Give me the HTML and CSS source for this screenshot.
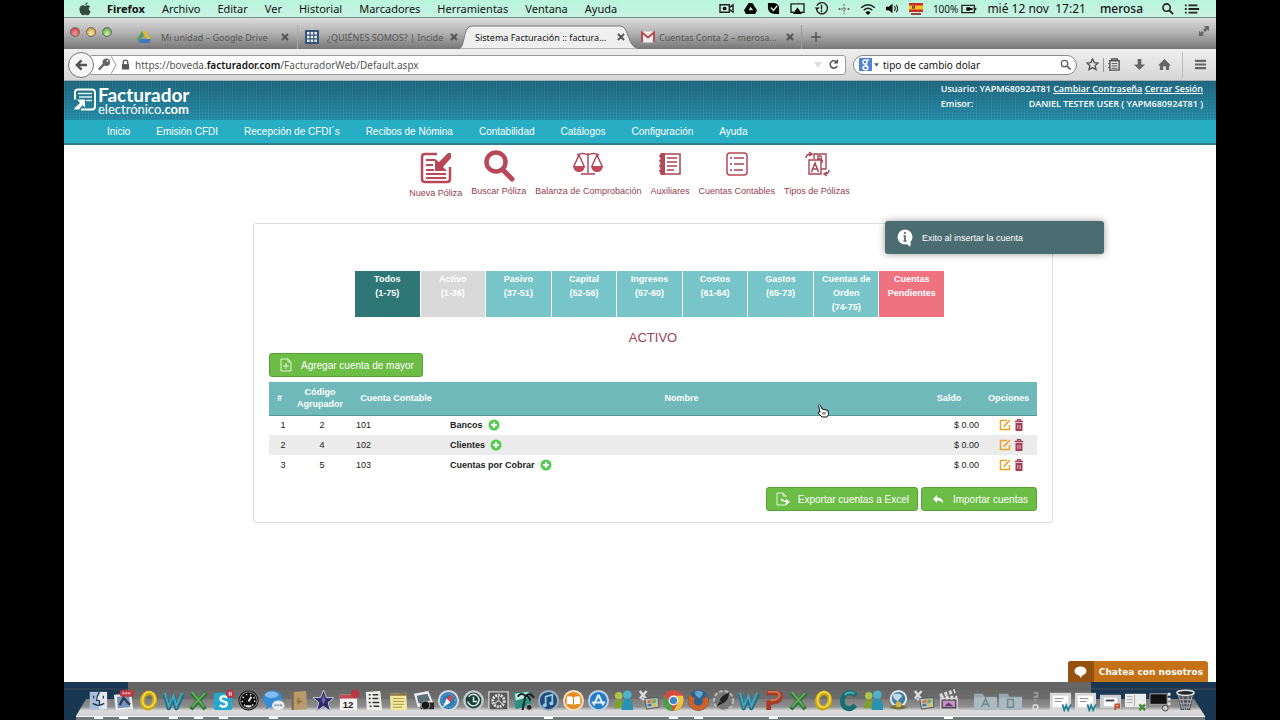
FILE: index.html
```html
<!DOCTYPE html>
<html lang="es">
<head>
<meta charset="utf-8">
<title>Sistema Facturación</title>
<link rel="stylesheet" href="styles.css">
</head>
<body>
<div class="screen">
  <header class="menubar">
    <svg class="apple" viewBox="0 0 12 14"><path d="M8.6.3c.1 1.400-1 2.700-2.400 2.800C6 1.800 7.200.5 8.600.3zM6.200 3.900c.7 0 1.500-.8 2.700-.7 1 .1 1.800.5 2.300 1.300-2 1.200-1.700 4 .4 4.900C11 11.200 10 13 8.800 13.200c-.9.1-1.300-.5-2.400-.5s-1.600.6-2.400.5C1.800 13-.5 8.200.8 5.400 1.500 4 2.700 3.300 3.800 3.300s1.700.6 2.400.6z"/></svg>
    <nav class="menus"><b>Firefox</b><span>Archivo</span><span>Editar</span><span>Ver</span><span>Historial</span><span>Marcadores</span><span>Herramientas</span><span>Ventana</span><span>Ayuda</span></nav>
    <div class="status">
      <svg class="s16" viewBox="0 0 16 14"><path d="M1 3h10v8H1zM11 6l4-3v8l-4-3" fill="none" stroke="#222" stroke-width="1.500"/><circle cx="6" cy="7" r="2"/></svg>
      <svg class="s14" viewBox="0 0 14 14"><path d="M5 1h4l5 8-2 4H2L0 9zM7 5L5 9h5z" fill-rule="evenodd"/></svg>
      <svg class="s14" viewBox="0 0 14 14"><path d="M1 1h6c4 0 6 3 6 6v6H9C4 13 1 10 1 6z"/><path d="M4 6l3 3 4-5" fill="none" stroke="#c8f3e2" stroke-width="1.500"/></svg>
      <svg class="s16" viewBox="0 0 16 14"><path d="M4 11H1V2h14v9h-3" fill="none" stroke="#222" stroke-width="1.500"/><path d="M8 6l5 7H3z"/></svg>
      <svg class="s14" viewBox="0 0 14 14"><path d="M2 4a6 6 0 1 1-.5 4M7 3v5M7 9v2" fill="none" stroke="#222" stroke-width="1.500"/><path d="M0 6h5L2 9z"/></svg>
      <svg class="s12" viewBox="0 0 12 12"><path d="M6 1v10M3 6h6" stroke="#555" stroke-dasharray="2 1" fill="none"/><circle cx="1.500" cy="6" r="1" fill="#555"/><circle cx="10.500" cy="6" r="1" fill="#555"/></svg>
      <svg class="s18" viewBox="0 0 18 14"><g fill="none" stroke="#222" stroke-width="1.700"><path d="M1 5.500q8-7 16 0M4 8.500q5-4.500 10 0"/></g><path d="M6 11q3-3 6 0l-3 3z"/></svg>
      <svg class="s14" viewBox="0 0 14 12"><path d="M0 4h3l4-3v10L3 8H0z"/><path d="M9 3.500q2 2.500 0 5M11 2q3 4 0 8" fill="none" stroke="#222" stroke-width="1.200"/></svg>
      <svg class="flag" viewBox="0 0 14 12"><path fill="#c92b28" d="M0 0h14v9H0z"/><path fill="#f4c51c" d="M0 2.500h14v4H0z"/><path fill="#944" d="M3 2.800h3v3H3zM2 10h10v2H2z"/></svg>
      <span class="charge">100%</span>
      <svg class="s18" viewBox="0 0 18 10"><path d="M1 1h14v8H1zM16.500 3.500v3" fill="none" stroke="#222" stroke-width="1.500"/><path d="M3 5h3V3h4v1h3v2h-3v1H6V5z"/></svg>
      <span class="clock">mié 12 nov&nbsp; 17:21</span>
      <span class="account">merosa</span>
      <svg class="s14" viewBox="0 0 14 14"><circle cx="6" cy="6" r="4" fill="none" stroke="#222" stroke-width="1.700"/><path d="M9 9l4 4" stroke="#222" stroke-width="2"/></svg>
      <svg class="s18" viewBox="0 0 18 12"><path d="M1 2h2M1 6h2M1 10h2M5 2h10M5 6h12M5 10h10" stroke="#222" stroke-width="2"/></svg>
    </div>
  </header>

  <div class="tabstrip">
    <div class="lights"><i class="red"></i><i class="yellow"></i><i class="lime"></i></div>
    <div class="tab first">
      <svg class="fav" viewBox="0 0 14 12"><path fill="#d9bb3a" d="M5 0h4l5 8h-4z"/><path fill="#5d9a5d" d="M5 0l2 4-5 8-2-4z"/><path fill="#3f75c4" d="M4 8h10l-2 4H2z"/></svg>
      <span class="title">Mi unidad – Google Drive</span><button class="close" aria-label="Cerrar pestaña"><svg viewBox="0 0 8 8"><path d="M1 1l6 6M7 1L1 7"/></svg></button>
    </div>
    <div class="tab second">
      <svg class="fav" viewBox="0 0 14 14"><path fill="#345575" d="M0 0h14v14H0z"/><path stroke="#e8eef2" stroke-width="2.500" stroke-dasharray="2.500 1.200" d="M2 3.300h10M2 7h10M2 10.700h10"/></svg>
      <span class="title">¿QUIÉNES SOMOS? | Incide</span><button class="close" aria-label="Cerrar pestaña"><svg viewBox="0 0 8 8"><path d="M1 1l6 6M7 1L1 7"/></svg></button>
    </div>
    <div class="tab active">
      <svg class="shape" viewBox="0 0 184 24" preserveAspectRatio="none"><path d="M0 24C8 24 4 1 14 1H163C173 1 169 24 184 24z" fill="#efefef" stroke="#777"/></svg>
      <span class="title">Sistema Facturación :: factura...</span><button class="close" aria-label="Cerrar pestaña"><svg viewBox="0 0 8 8"><path d="M1 1l6 6M7 1L1 7"/></svg></button>
    </div>
    <div class="tab last">
      <svg class="fav" viewBox="0 0 14 11"><path fill="#eee" d="M0 0h14v11H0z"/><path d="M1 11V1l6 5 6-5v10" fill="none" stroke="#b64b52" stroke-width="2"/></svg>
      <span class="title">Cuentas Conta 2 – merosa...</span><button class="close" aria-label="Cerrar pestaña"><svg viewBox="0 0 8 8"><path d="M1 1l6 6M7 1L1 7"/></svg></button>
    </div>
    <button class="newtab" aria-label="Nueva pestaña"><svg viewBox="0 0 10 10"><path d="M5 0v10M0 5h10" stroke="#555" stroke-width="1.500"/></svg></button>
    <svg class="full" viewBox="0 0 12 12"><path fill="#666" d="M6 1h5v5L9.500 4.500 7 7 5 5l2.500-2.500zM1 6v5h5L4.500 9.500 6 8 4 6 2.500 7.500z"/></svg>
  </div>

  <div class="toolbar">
    <button class="back" aria-label="Atrás"><svg viewBox="0 0 14 12"><path d="M7 1L2 6l5 5M2 6h11" fill="none" stroke="#555" stroke-width="2.700"/></svg></button>
    <div class="urlbar">
      <svg class="key" viewBox="0 0 14 14"><circle cx="9" cy="4.500" r="4" fill="#666"/><path d="M6.500 6.500L1 12.500" stroke="#666" stroke-width="2.500"/><circle cx="10.200" cy="3.200" r="1" fill="#eee"/></svg>
      <svg class="chev" viewBox="0 0 6 18"><path d="M0 0l5 9-5 9" fill="none" stroke="#999"/></svg>
      <svg class="lock" viewBox="0 0 10 12"><path d="M1 5h8v6H1z" fill="#555"/><path d="M2.500 5V3a2.500 2.500 0 0 1 5 0v2" fill="none" stroke="#555" stroke-width="1.500"/></svg>
      <div class="url" role="textbox" aria-label="Dirección" contenteditable="true" spellcheck="false">https://boveda.<b>facturador.com</b>/FacturadorWeb/Default.aspx</div>
      <svg class="drop" viewBox="0 0 8 6"><path d="M0 0h8L4 6z" fill="#ddd"/></svg>
      <svg class="reload" viewBox="0 0 12 12"><path d="M9.500 3.500A4 4 0 1 0 10 7.500" fill="none" stroke="#555" stroke-width="1.700"/><path d="M11 0v5H6z" fill="#555"/></svg>
    </div>
    <div class="search">
      <svg class="engine" viewBox="0 0 13 13"><path fill="#4d83d6" d="M0 0h13v13H0z"/><g fill="none" stroke="#fff" stroke-width="1.400"><circle cx="6" cy="4" r="2"/><path d="M8 2h2M6 6.500q3 1 1.500 2"/><ellipse cx="6.500" cy="10" rx="2.500" ry="1.700"/></g></svg>
      <svg class="tri" viewBox="0 0 6 4"><path d="M0 0h6L3 4z" fill="#666"/></svg>
      <input type="text" value="tipo de cambio dolar" aria-label="Buscar">
      <svg class="lens" viewBox="0 0 12 12"><circle cx="5" cy="5" r="3.500" fill="none" stroke="#666" stroke-width="1.500"/><path d="M7.500 7.500l4 4" stroke="#666" stroke-width="2"/></svg>
    </div>
    <div class="tools">
      <svg viewBox="0 0 14 14"><path d="M7 1l1.800 4 4.200.4-3.200 2.900 1 4.200L7 10.300l-3.800 2.200 1-4.200L1 5.400 5.200 5z" fill="none" stroke="#555" stroke-width="1.500"/></svg>
      <i class="rule"></i>
      <svg viewBox="0 0 14 14"><path d="M2 3h10v10H2zM4 3V1h6v2" fill="none" stroke="#555" stroke-width="1.500"/><path d="M4 6h6M4 8.500h6M4 11h6M0 6h2M0 10h2" stroke="#555"/></svg>
      <svg viewBox="0 0 14 14"><path d="M5 1h4v6h4l-6 6-6-6h4z" fill="#666"/></svg>
      <svg viewBox="0 0 14 14"><path d="M7 1l7 7h-2v5H8.500V9h-3v4H2V8H0z" fill="#666"/></svg>
      <i class="rule tall"></i>
      <svg viewBox="0 0 14 14"><path d="M1 3h12M1 7h12M1 11h12" stroke="#666" stroke-width="2.400"/></svg>
    </div>
  </div>

  <div class="banner">
    <div class="top">
      <div class="brand">
        <svg viewBox="0 0 24 24"><path d="M2 12V5q0-3 3-3h14q3 0 3 3v14q0 3-3 3H8" fill="none" stroke="#fff" stroke-width="2"/><path d="M5 6h14M6 9.500h13M13 13h6" stroke="#e3f3f7" stroke-width="1.600"/><path d="M4 12h8v8l-2.500-2.500L6 22H1l1-2 5-4.500z" fill="#fff"/></svg>
        <div><strong>Facturador</strong><span>electrónico<b>.com</b></span></div>
      </div>
      <div class="user">
        <div>Usuario: YAPM680924T81 <a href="#">Cambiar Contraseña</a> <a href="#">Cerrar Sesión</a></div>
        <div class="issuer"><span>Emisor:</span><span>DANIEL TESTER USER ( YAPM680924T81 )</span></div>
      </div>
    </div>
    <nav class="mainnav"><a href="#">Inicio</a><a href="#">Emisión CFDI</a><a href="#">Recepción de CFDI´s</a><a href="#">Recibos de Nómina</a><a href="#">Contabilidad</a><a href="#">Catálogos</a><a href="#">Configuración</a><a href="#">Ayuda</a></nav>
  </div>

  <main class="page">
    <nav class="actions">
      <a href="#" class="big"><svg viewBox="0 0 32 32"><path d="M17 2H5Q2 2 2 5v22q0 3 3 3h22q3 0 3-3V15" fill="none" stroke="#b84759" stroke-width="2.500"/><path d="M6 8h9M6 13h7M6 18h8M6 22h20M6 26h20" stroke="#b84759" stroke-width="2"/><path d="M15 7v12h12l-4-4 8-9V1h-3l-9 9z" fill="#b84759"/></svg>Nueva Póliza</a>
      <a href="#"><svg viewBox="0 0 32 32"><circle cx="13" cy="12" r="9.500" fill="none" stroke="#b84759" stroke-width="4.500"/><path d="M20 20l9 9" stroke="#b84759" stroke-width="5" stroke-linecap="round"/></svg>Buscar Póliza</a>
      <a href="#"><svg viewBox="0 0 32 32"><g fill="none" stroke="#a94355" stroke-width="1.400"><path d="M5 5q6-3 11 0 5-3 11 0M16 3v20M9 24h14M7 5L1.500 17M7 5l5.500 12M25 5l-5.500 12M25 5l5.500 12"/></g><path d="M1 16h12q-1 6-6 6t-6-6zM19 16h12q-1 6-6 6t-6-6z" fill="#c0495c"/></svg>Balanza de Comprobación</a>
      <a href="#"><svg viewBox="0 0 32 32"><path d="M7 4h19v20H7z" fill="none" stroke="#a94355" stroke-width="1.500"/><path d="M7 3h4v22H7z" fill="#b84759"/><path d="M5 6h4M5 11h4M5 16h4M5 21h4M13 8h10M13 12h10M13 16h10M13 20h7" stroke="#a94355" stroke-width="1.700"/></svg>Auxiliares</a>
      <a href="#"><svg viewBox="0 0 32 32"><rect x="6" y="3" width="20" height="22" rx="3" fill="none" stroke="#b84759" stroke-width="1.500"/><path d="M9 8h2M9 14h2M9 20h2M13 8h10M13 14h10M13 20h9" stroke="#a94355" stroke-width="1.700"/></svg>Cuentas Contables</a>
      <a href="#"><svg viewBox="0 0 32 32"><path d="M13 9V4h12v15h-5M8 10h12v14H8z" fill="none" stroke="#a94355" stroke-width="1.400"/><path d="M10.500 22l3.500-9 3.500 9M12 19h4M17 10V6h2.500q2 1.500 0 3 3 1.500 1 4M17 9h3M5 8q0-4 5-4M8 2l3 2-3 2M28 20q0 4-5 4M26 22l-3 2 3 2" fill="none" stroke="#a94355" stroke-width="1.500"/></svg>Tipos de Pólizas</a>
    </nav>

    <div class="toast" role="status"><svg viewBox="0 0 16 18"><circle cx="8" cy="8" r="7.500" fill="#fff"/><path d="M9 14h5l-1 4z" fill="#fff"/><path d="M8 3v2M6.500 7H8v5M6.500 12h3" stroke="#4b6d72" stroke-width="1.700" fill="none"/></svg>Exito al insertar la cuenta</div>

    <section class="card">
      <div class="groups">
        <button class="on"><span>Todos<br>(1-75)</span></button><button class="off"><span>Activo<br>(1-36)</span></button><button><span>Pasivo<br>(37-51)</span></button><button><span>Capital<br>(52-56)</span></button><button><span>Ingresos<br>(57-60)</span></button><button><span>Costos<br>(61-64)</span></button><button><span>Gastos<br>(65-73)</span></button><button><span>Cuentas de<br>Orden<br>(74-75)</span></button><button class="pending"><span>Cuentas<br>Pendientes</span></button>
      </div>
      <h1>ACTIVO</h1>
      <button class="green"><svg viewBox="0 0 14 14"><path d="M2 1h7l3 3v9H2zM9 1v3h3M7 5v6M4 8h6" fill="none" stroke="#e5f6dc"/></svg>Agregar cuenta de mayor</button>
      <table>
        <colgroup><col class="c1"><col class="c2"><col class="c3"><col><col class="c5"><col class="c6"></colgroup>
        <thead><tr><th>#</th><th>Código Agrupador</th><th>Cuenta Contable</th><th>Nombre</th><th>Saldo</th><th>Opciones</th></tr></thead>
        <tbody>
          <tr><td>1</td><td>2</td><td>101</td><td><span class="name">Bancos <button class="icon" aria-label="Agregar subcuenta"><svg><use href="#plus"/></svg></button></span></td><td>$ 0.00</td><td><span class="ops"><button class="icon" aria-label="Editar"><svg><use href="#edit"/></svg></button><button class="icon" aria-label="Eliminar"><svg><use href="#bin"/></svg></button></span></td></tr>
          <tr><td>2</td><td>4</td><td>102</td><td><span class="name">Clientes <button class="icon" aria-label="Agregar subcuenta"><svg><use href="#plus"/></svg></button></span></td><td>$ 0.00</td><td><span class="ops"><button class="icon" aria-label="Editar"><svg><use href="#edit"/></svg></button><button class="icon" aria-label="Eliminar"><svg><use href="#bin"/></svg></button></span></td></tr>
          <tr><td>3</td><td>5</td><td>103</td><td><span class="name">Cuentas por Cobrar <button class="icon" aria-label="Agregar subcuenta"><svg><use href="#plus"/></svg></button></span></td><td>$ 0.00</td><td><span class="ops"><button class="icon" aria-label="Editar"><svg><use href="#edit"/></svg></button><button class="icon" aria-label="Eliminar"><svg><use href="#bin"/></svg></button></span></td></tr>
        </tbody>
      </table>
      <div class="foot">
        <button class="green"><svg viewBox="0 0 14 14"><path d="M10 5V4L7 1H1v12h9v-2M7 1v3h3" fill="none" stroke="#e5f6dc"/><path d="M5 7q2 2.500 6 2.500" fill="none" stroke="#fff" stroke-width="1.500"/><path d="M10 7l4 3-4 3z" fill="#fff"/></svg>Exportar cuentas a Excel</button>
        <button class="green"><svg viewBox="0 0 14 14"><path d="M2 7l4-4v2.500q6 0 6 5.500-2-2.500-6-2.500V11z" fill="#fff"/></svg>Importar cuentas</button>
      </div>
    </section>
    <svg class="pointer" viewBox="0 0 12 14"><path d="M3 8L1.500 1.500q1-1.500 2 0L5 5l6 1.500.5 4L10 13H5L1 9q.5-1.500 2-1z" fill="#fff" stroke="#111"/><path d="M6 8v2.500M8 8v2.500" stroke="#333"/></svg>
    <button class="chat"><span class="bubble"><svg viewBox="0 0 14 13"><ellipse cx="7" cy="5.500" rx="6.500" ry="5" fill="#fff"/><path d="M5 9l2 4 3-4z" fill="#fff"/></svg></span><span class="label">Chatea con nosotros</span></button>
  </main>

  <footer class="dock">
    <svg class="shelf" viewBox="0 0 1152 38" preserveAspectRatio="none"><defs><linearGradient id="gs" x2="0" y2="1"><stop offset="0" stop-color="#7c7c7c"/><stop offset=".45" stop-color="#8e8e8e"/><stop offset=".68" stop-color="#dadada"/><stop offset="1" stop-color="#d2d2d2"/></linearGradient></defs><path d="M0 7h1152" stroke="#5c5c5c" opacity=".6"/><path d="M22 17H1130L1141 34H12z" fill="url(#gs)"/><path d="M12 34h1129v1H12z" fill="#f5f5f5"/><path d="M12 35h1129v3H12z" fill="#74787c"/></svg>
    <div class="apps">
      <svg class="run"><use href="#finder"/></svg><svg class="run"><use href="#mail"/></svg><svg><use href="#ring"/></svg><svg class="run"><use href="#word"/></svg><svg class="run"><use href="#excel"/></svg><svg class="run"><use href="#skype"/></svg><svg><use href="#dash"/></svg><svg class="run"><use href="#chatapp"/></svg><svg><use href="#book"/></svg><svg><use href="#imovie"/></svg><svg><use href="#cal"/></svg><svg><use href="#todo"/></svg><svg><use href="#notes"/></svg><svg><use href="#photo"/></svg><svg><use href="#safari"/></svg><svg><use href="#tm"/></svg><svg><use href="#prefs"/></svg><svg><use href="#palm"/></svg><svg class="run"><use href="#itunes"/></svg><svg><use href="#ibooks"/></svg><svg><use href="#store"/></svg><svg><use href="#msn"/></svg><svg><use href="#rdc"/></svg><svg class="run"><use href="#chrome"/></svg><svg class="run"><use href="#firefox"/></svg><svg><use href="#rocket"/></svg><svg><use href="#word"/></svg><svg class="run"><use href="#ppt"/></svg><svg><use href="#excel"/></svg><svg><use href="#ring"/></svg><svg><use href="#comm"/></svg><svg><use href="#msn"/></svg><svg><use href="#globe"/></svg><svg><use href="#rdc"/></svg><svg class="run"><use href="#clap"/></svg>
      <i></i>
      <svg><use href="#foldera"/></svg><svg><use href="#folderd"/></svg><svg><use href="#marks"/></svg><svg><use href="#win"/></svg><svg><use href="#win"/></svg><svg><use href="#winr"/></svg><svg><use href="#wing"/></svg><svg><use href="#winb"/></svg><svg><use href="#trash"/></svg>
    </div>
  </footer>
</div>

<svg class="defs" aria-hidden="true"><defs>
  <symbol id="plus" viewBox="0 0 12 12"><circle cx="6" cy="6" r="5.500" fill="#50cf4f"/><path d="M6 3v6M3 6h6" stroke="#fff" stroke-width="2.200"/></symbol>
  <symbol id="edit" viewBox="0 0 12 12"><path d="M8 1.500H1.500v9h9V6" fill="none" stroke="#e8a42a" stroke-width="1.500"/><path d="M4 8.500l1-2.500L10.500.5l1 1L6 7.500z" fill="#e8a42a"/></symbol>
  <symbol id="bin" viewBox="0 0 12 12"><path d="M2 2.500h8M4.500 2V.7h3V2" fill="none" stroke="#a33c55" stroke-width="1.300"/><path d="M2.500 4h7v8h-7z" fill="#a33c55"/><path d="M4.500 6v4M6 6v4M7.500 6v4" stroke="#e5b3bd" stroke-width=".7"/></symbol>
  <symbol id="finder" viewBox="0 0 24 24"><path d="M3 3h18v18H3z" fill="#dfe6ef"/><path d="M3 3h10q-3 5-3 9h3v9H3z" fill="#a9bede"/><path d="M7 7v3M17 7v3M6 15q6 4 12 0M13 3q-3 5-3 9h3v5" fill="none" stroke="#26354f" stroke-width="1.300"/></symbol>
  <symbol id="mail" viewBox="0 0 24 24"><path d="M2 6l18-1 2 16-18 1z" fill="#eee"/><path d="M5 8l13-1 1 12-13 1z" fill="#7896bd"/><path d="M8 17l4-8 5 6 2 1" stroke="#333e50" stroke-width="2.500" fill="none"/><rect x="8" y="1" width="15" height="7" rx="3" fill="#bf3845"/><path d="M11 4.500h9" stroke="#eab9bd" stroke-width="2" stroke-dasharray="2 1"/></symbol>
  <symbol id="ring" viewBox="0 0 24 24"><ellipse cx="12" cy="12" rx="6.500" ry="8" fill="none" stroke="#c9a512" stroke-width="5" transform="rotate(12 12 12)"/><ellipse cx="12" cy="11" rx="6.500" ry="8" fill="none" stroke="#f2d844" stroke-width="2" transform="rotate(12 12 12)"/></symbol>
  <symbol id="word" viewBox="0 0 24 24"><path d="M3 5l4 15L12 8l3 12L22 5" fill="none" stroke="#236f86" stroke-width="4.500" stroke-linejoin="round"/><path d="M3 4l4 14L12 7l3 11L21 4" fill="none" stroke="#46a6be" stroke-width="2"/></symbol>
  <symbol id="excel" viewBox="0 0 24 24"><path d="M5 4l14 17M20 4L4 21" stroke="#2e7635" stroke-width="4.500"/><path d="M5 3l13 16M19 4L5 19" stroke="#5fae5c" stroke-width="2"/></symbol>
  <symbol id="skype" viewBox="0 0 24 24"><rect x="2" y="4" width="19" height="18" rx="3" fill="#23a9cf"/><path d="M16 9q-4-3-7 0-1 3 3 4 5 1 3 4-3 3-7 0" fill="none" stroke="#fff" stroke-width="2.500"/><circle cx="19" cy="5" r="4.500" fill="#b93745"/><path d="M18 3v4M20 3v4" stroke="#fff"/></symbol>
  <symbol id="dash" viewBox="0 0 24 24"><circle cx="12" cy="12" r="10.500" fill="#111"/><circle cx="12" cy="12" r="9" fill="none" stroke="#999"/><circle cx="12" cy="12" r="6.500" fill="none" stroke="#ddd" stroke-width="1.500" stroke-dasharray="1.500 3"/><path d="M12 13l3-5M9 18h6" stroke="#e5e5e5" stroke-width="2"/></symbol>
  <symbol id="chatapp" viewBox="0 0 24 24"><ellipse cx="11" cy="10" rx="10" ry="8.500" fill="#348cd4"/><path d="M5 16l-1 5 6-3z" fill="#348cd4"/><ellipse cx="10" cy="6" rx="7" ry="3.500" fill="#83bdf0"/><ellipse cx="17" cy="17" rx="6.500" ry="5" fill="#e8edf2"/><path d="M13 17h8" stroke="#8a939f" stroke-width="2" stroke-dasharray="2 1"/></symbol>
  <symbol id="book" viewBox="0 0 24 24"><path d="M5 3l15-1 1 19-16 1z" fill="#b89a6b"/><path d="M5 3l2-.2V22H5z" fill="#7d6542"/><path d="M10 13h6M12 9v7" stroke="#907347" stroke-width="2"/></symbol>
  <symbol id="imovie" viewBox="0 0 24 24"><path d="M12 1l3 8h8l-6 5 2 9-7-5-7 5 2-9-6-5h8z" fill="#312c66" stroke="#cbc8e4"/><path d="M12 6l2 6-2 4-2-4z" fill="#7063af"/></symbol>
  <symbol id="cal" viewBox="0 0 24 24"><path d="M3 6h18v16H3z" fill="#f4f4f4"/><path d="M3 6h18v4H3z" fill="#c54850"/><text x="6" y="20" class="day">12</text><circle cx="19" cy="5" r="4.500" fill="#b93745"/></symbol>
  <symbol id="todo" viewBox="0 0 24 24"><path d="M4 3l15-1 2 20H5z" fill="#efefec"/><path d="M7 6h2M7 10h2M7 14h2M8 18h2M11 6h6M11 10h6M11 14h7M12 18h6" stroke="#333" stroke-width="1.500"/></symbol>
  <symbol id="notes" viewBox="0 0 24 24"><path d="M3 5l17-1 1 18H4z" fill="#f3e99b"/><path d="M3 5l17-1v3H3z" fill="#8c7449"/><path d="M6 10h12M6 13h12M6 16h12M6 19h10" stroke="#a49852"/></symbol>
  <symbol id="photo" viewBox="0 0 24 24"><path d="M2 5l15-3 5 12-16 5z" fill="#eee"/><path d="M5 7l11-2 3 7-12 3z" fill="#5a6f79"/><path d="M9 14h14v7H9z" fill="#292929"/><circle cx="14" cy="17" r="4.500" fill="#171717" stroke="#aaa"/></symbol>
  <symbol id="safari" viewBox="0 0 24 24"><circle cx="12" cy="12" r="10" fill="#2e7cb4" stroke="#d1dae0" stroke-width="2"/><circle cx="12" cy="12" r="7" fill="none" stroke="#b7dbef" stroke-dasharray="1 2"/><path d="M18 5l-4 9-4-4z" fill="#d44"/><path d="M6 19l4-9 4 4z" fill="#fff"/></symbol>
  <symbol id="tm" viewBox="0 0 24 24"><circle cx="12" cy="12" r="9.500" fill="#1d3f39" stroke="#c5cbcb" stroke-width="2.500"/><path d="M7 8a6 6 0 1 1-1 5M12 8v5h4" fill="none" stroke="#d6efe8" stroke-width="1.500"/></symbol>
  <symbol id="prefs" viewBox="0 0 24 24"><path d="M2 3h20v19H2z" fill="#555" stroke="#ccc" stroke-width="1.500"/><circle cx="12" cy="12.500" r="6" fill="none" stroke="#ddd" stroke-width="3" stroke-dasharray="2 1"/><path d="M12 12V6M12 12l5 4M12 12l-5 4" stroke="#bbb" stroke-width="1.500"/></symbol>
  <symbol id="palm" viewBox="0 0 24 24"><path d="M1 4l17-2 2 15-16 4z" fill="#2b9186"/><path d="M3 5l14-2 1 5-14 4z" fill="#c7e7e3"/><path d="M14 7l-3 15M14 7q-5-4-8 1M14 7q5-4 9 2M14 7q4 0 5 5" stroke="#15231c" stroke-width="2" fill="none"/><circle cx="18" cy="19" r="3" fill="#202729" stroke="#aaa"/></symbol>
  <symbol id="itunes" viewBox="0 0 24 24"><circle cx="12" cy="12" r="10" fill="#234a76" stroke="#98b2c4" stroke-width="2"/><path d="M9 17V8l7-2v9" fill="none" stroke="#8fd0ed" stroke-width="1.800"/><circle cx="8" cy="17" r="2" fill="#8fd0ed"/><circle cx="15" cy="15" r="2" fill="#8fd0ed"/></symbol>
  <symbol id="ibooks" viewBox="0 0 24 24"><circle cx="12" cy="12" r="10" fill="#e68b1e" stroke="#f5dec2" stroke-width="2"/><path d="M5 8q4-1 7 1 3-2 7-1v8q-4-1-7 1-3-2-7-1z" fill="#fff"/><path d="M12 9v8" stroke="#d77b15"/></symbol>
  <symbol id="store" viewBox="0 0 24 24"><circle cx="12" cy="12" r="10" fill="#257cc4" stroke="#b9d3e8" stroke-width="2"/><path d="M12 6L7 17M12 6l5 11M5 14h14" stroke="#e4f3ff" stroke-width="2"/></symbol>
  <symbol id="msn" viewBox="0 0 24 24"><circle cx="7" cy="7" r="4" fill="#a8c545"/><path d="M2 20q0-9 5-9t5 9z" fill="#7fa12f"/><circle cx="16" cy="6" r="4.500" fill="#4bb3d0"/><path d="M10 22q0-12 6-12t6 12z" fill="#2792b4"/></symbol>
  <symbol id="rdc" viewBox="0 0 24 24"><path d="M3 2l7 9M10 2L3 10M5 11l4-1" stroke="#ddd" stroke-width="2.500"/><path d="M8 10l14-1 1 10-13 2z" fill="#b9c4bd" stroke="#555"/><path d="M11 12l4-1v3l-4 1z" fill="#d97047"/><path d="M16 11h4v3l-4 1z" fill="#72a755"/><path d="M11 16l4-1v3h-4z" fill="#3b78ae"/><path d="M16 16l4-1v3h-4z" fill="#e0c04a"/></symbol>
  <symbol id="chrome" viewBox="0 0 24 24"><circle cx="12" cy="12" r="11" fill="#d84b3e"/><path d="M2 7l7 8 3 8Q2 23 1 13z" fill="#4c9e4b"/><path d="M12 7h10q3 14-10 16l5-9z" fill="#e8c73c"/><circle cx="12" cy="12" r="4.500" fill="#4285c8" stroke="#eee" stroke-width="1.500"/></symbol>
  <symbol id="firefox" viewBox="0 0 24 24"><circle cx="12" cy="12" r="11" fill="#2d618d"/><path d="M3 4q0 4 5 5l-1 5q2 4 7 3 4-2 2-8 4 3 3-3 7 7 1 13-9 8-17-1-3-7 0-14z" fill="#cf6027"/><path d="M8 3q5-3 9 1l-3 5q-5 0-6-6z" fill="#62a6c8"/></symbol>
  <symbol id="rocket" viewBox="0 0 24 24"><circle cx="12" cy="12" r="10" fill="#777" stroke="#bbb" stroke-width="2" stroke-dasharray="4 2"/><path d="M18 4q-8 2-10 8l3 3q6-2 7-11zM8 13l-3 5 6-3z" fill="#222"/></symbol>
  <symbol id="ppt" viewBox="0 0 24 24"><path d="M7 22V12M5 4h9q6 0 5 5-1 5-10 5" fill="none" stroke="#a33c25" stroke-width="5"/><path d="M6 3h9q4 1 3 5-2 4-9 4" fill="none" stroke="#df714f" stroke-width="2"/></symbol>
  <symbol id="comm" viewBox="0 0 24 24"><path d="M20 7Q14 1 8 6q-5 7 0 13 6 4 11-2" fill="none" stroke="#176e72" stroke-width="5"/><path d="M18 5Q13 2 8 6" fill="none" stroke="#4faeb0" stroke-width="2"/></symbol>
  <symbol id="globe" viewBox="0 0 24 24"><circle cx="12" cy="10" r="8" fill="#417aa4" stroke="#dfe8ee" stroke-width="2"/><path d="M6 6q6-3 10 1l-5 6-4-3z" fill="#bfd7df"/><path d="M2 19q10-5 20 0-10 5-20 0z" fill="#75733e"/><circle cx="12" cy="16" r="3" fill="#d6b448"/></symbol>
  <symbol id="clap" viewBox="0 0 24 24"><path d="M4 10h17v11H4z" fill="#333" stroke="#ddd" stroke-width="1.500"/><path d="M3 7l16-5M4 9h17" stroke="#ddd" stroke-width="4" stroke-dasharray="3 2"/><path d="M6 12h13v7H6z" fill="#c294c2"/><path d="M8 18l4-4 5 4z" fill="#5a3c68"/></symbol>
  <symbol id="foldera" viewBox="0 0 24 24"><path d="M0 5h9l2 3h13v14H0z" fill="#97a9b1"/><path d="M0 9h24v13H0z" fill="#a9bac1"/><path d="M8 19l4-9 4 9M9 16h6" stroke="#718790" stroke-width="1.500" fill="none"/></symbol>
  <symbol id="folderd" viewBox="0 0 24 24"><path d="M0 5h9l2 3h13v14H0z" fill="#97a9b1"/><path d="M0 9h24v13H0z" fill="#a9bac1"/><path d="M9 11h6v8H9z" stroke="#718790" stroke-width="1.500" fill="none"/></symbol>
  <symbol id="marks" viewBox="0 0 24 24"><path d="M10 4h4v4h-4M12 10v3" stroke="#999" stroke-width="2" fill="none"/><circle cx="12" cy="19" r="2.500" fill="none" stroke="#ddd" stroke-width="1.500"/></symbol>
  <symbol id="win" viewBox="0 0 24 24"><path d="M1 4h22v18H1z" fill="#d7d8d8"/><path d="M4 7h16v12H4z" fill="#fff"/><path d="M6 10h9M6 13h7" stroke="#888"/><path d="M14 16l2 6 2-5 2 5 3-6" stroke="#2d8197" stroke-width="2" fill="none"/></symbol>
  <symbol id="winr" viewBox="0 0 24 24"><path d="M1 6h22v14H1z" fill="#c8cbcc"/><path d="M5 9h14v9H5z" fill="#fff"/><path d="M7 12h9" stroke="#445" stroke-width="2"/><path d="M17 22v-6h4v3h-3" stroke="#c25132" stroke-width="2" fill="none"/></symbol>
  <symbol id="wing" viewBox="0 0 24 24"><path d="M1 5h22v14H1z" fill="#eceeed"/><path d="M3 8h6M3 11h6M3 14h6M11 6v12" stroke="#aaa"/><path d="M16 16l6 6M22 16l-6 6" stroke="#448c3d" stroke-width="2.500"/></symbol>
  <symbol id="winb" viewBox="0 0 24 24"><path d="M1 5h18v11H1z" fill="#111" stroke="#aaa"/><path d="M21 4v14" stroke="#ddd" stroke-width="3" stroke-dasharray="3 2"/><circle cx="17" cy="20" r="3" fill="#ccc" stroke="#444"/></symbol>
  <symbol id="trash" viewBox="0 0 24 24"><path d="M3 4l4 18h10l4-18z" fill="#4e5458"/><path d="M5 7l4 14M9 7l2 15M15 7l-2 15M19 7l-4 14M5 11h14M6 15h12M7 19h10" stroke="#a7adaf"/><ellipse cx="12" cy="4" rx="9" ry="2.700" fill="#24282a" stroke="#dfe2e3" stroke-width="1.500"/></symbol>
</defs></svg>
</body>
</html>
```
FILE: styles.css
```css
* { box-sizing: border-box; }
body { margin: 0; background: #000; font-family: "Liberation Sans", Arial, sans-serif; }
button, input { font: inherit; border: 0; padding: 0; margin: 0; background: none; color: inherit; }
a { color: inherit; text-decoration: none; }
svg { flex: none; display: block; }
.defs { position: absolute; width: 0; height: 0; }
.screen { margin: 0 5%; min-height: 100vh; display: flex; flex-direction: column; background: #fff; }

.menubar { display: flex; align-items: center; justify-content: space-between; height: 18px; padding: 0 16px 0 15px; background: linear-gradient(#b8f6dd, #c9f2e3); border-bottom: 1px solid #6f9487; font: 11px "Noto Sans", sans-serif; color: #111; white-space: nowrap; }
.apple { width: 12px; height: 14px; fill: #354b42; margin-right: 16px; }
.menus { display: flex; gap: 17px; flex: 1; }
.status { display: flex; align-items: center; gap: 10px; }
.s12 { width: 12px; height: 12px; }
.s14 { width: 13px; height: 13px; }
.s16 { width: 15px; height: 13px; }
.s18 { width: 16px; height: 12px; }
.flag { width: 14px; height: 12px; }
.charge { font-size: 10px; margin-right: -7px; }
.clock, .account { font-size: 12px; line-height: 16px; }
.account { font-weight: 500; margin: 0 8px 0 4px; }

.tabstrip { display: flex; align-items: center; height: 31px; padding: 7px 6px 0 6px; background: linear-gradient(#dcdcdc, #b5b5b5 45%, #777); font: 9px "Noto Sans", sans-serif; color: #555; white-space: nowrap; }
.lights { display: flex; gap: 6px; width: 67px; align-self: flex-start; padding-top: 2px; }
.lights i { width: 10px; height: 10px; border-radius: 50%; border: 1px solid #666; }
.red { background: radial-gradient(circle at 50% 70%, #ff9a9a, #c8303c); }
.yellow { background: radial-gradient(circle at 50% 70%, #ffeb9a, #c78e2b); }
.lime { background: radial-gradient(circle at 50% 70%, #cff5a5, #4f9538); }
.tab { display: flex; align-items: center; height: 24px; }
.tab .title { flex: 1; overflow: hidden; }
.tab .close { width: 8px; height: 8px; flex: none; }
.tab .close svg { width: 8px; height: 8px; stroke: #555; stroke-width: 2; }
.fav { width: 14px; height: 14px; margin-right: 8px; }
.first { width: 161px; padding: 0 8px 0 0; border-right: 1px solid #aaa; }
.first .fav { margin-right: 10px; }
.second { width: 160px; padding: 0 0 0 7px; }
.active { position: relative; width: 183px; padding: 0 16px 0 17px; color: #111; }
.active .shape { position: absolute; inset: 0; width: 100%; height: 100%; }
.active .title, .active .close { position: relative; }
.last { width: 161px; border-right: 1px solid #999; padding-right: 7px; }
.last .fav { margin-right: 4px; }
.newtab { width: 10px; height: 10px; margin-left: 9px; }
.full { width: 12px; height: 12px; margin-left: auto; align-self: flex-start; }

.toolbar { display: flex; align-items: center; height: 32px; padding: 0 9px 0 4px; background: linear-gradient(#efefef, #d6d6d6); border-bottom: 1px solid #a9b3b7; font: 10px "Noto Sans", sans-serif; color: #555; white-space: nowrap; }
.back { z-index: 1; display: grid; place-items: center; width: 26px; height: 26px; border: 1px solid #777; border-radius: 50%; background: #f6f6f6; }
.back svg { width: 13px; height: 12px; }
.urlbar { display: flex; align-items: center; flex: 1; height: 20px; margin-left: -5px; padding: 0 6px 0 8px; border: 1px solid #999; border-radius: 3px; background: #fff; }
.key { width: 13px; height: 13px; }
.chev { width: 6px; height: 18px; margin: 0 4px 0 0; }
.lock { width: 9px; height: 12px; margin-right: 5px; }
.url { flex: 1; outline: 0; }
.url b { font-weight: 600; color: #111; }
.drop { width: 8px; height: 6px; margin-right: 6px; }
.reload { width: 11px; height: 11px; }
.search { display: flex; align-items: center; width: 224px; height: 20px; margin-left: 7px; padding: 0 5px; border: 1px solid #888; border-radius: 10px; background: #fff; }
.engine { width: 13px; height: 13px; }
.tri { width: 5px; height: 4px; margin: 0 4px 0 2px; }
.search input { flex: 1; min-width: 0; color: #111; outline: 0; }
.lens { width: 11px; height: 11px; }
.tools { display: flex; align-items: center; margin-left: 9px; gap: 12px; }
.tools svg { width: 13px; height: 13px; }
.tools .rule { width: 1px; height: 14px; margin: 0 -8px 0 -8px; background: #999; }
.tools .tall { height: 26px; margin: 0 -1px; background: #bbb; }

.banner { border-bottom: 2px solid #2e7e91; color: #fff; }
.top { display: flex; justify-content: space-between; height: 39px; padding: 0 13px 0 9px; background: repeating-linear-gradient(90deg, #ffffff0c 0 1px, #0000 1px 3px), repeating-linear-gradient(#0000000c 0 1px, #0000 1px 3px), linear-gradient(#1e667f, #238ba6); }
.brand { display: flex; gap: 1px; padding-top: 5px; }
.brand svg { width: 24px; height: 25px; margin-top: 1px; }
.brand strong, .brand span { display: block; }
.brand strong { font: bold 19px/18px Lato, sans-serif; }
.brand span { font: 13px/10px Lato, sans-serif; }
.user { font: 600 9px/15px "Open Sans", sans-serif; white-space: nowrap; }
.user a { text-decoration: underline; }
.issuer { display: flex; justify-content: space-between; }
.mainnav { display: flex; gap: 26px; height: 23px; padding-left: 43px; align-items: center; background: #27adc4; font-size: 10px; white-space: nowrap; }

.page { position: relative; flex: 1; }
.actions { display: flex; justify-content: center; gap: 9px; height: 78px; padding: 5px 21px 0 0; font-size: 9px; line-height: 12px; color: #93404f; white-space: nowrap; }
.actions a { display: flex; flex-direction: column; align-items: center; gap: 3px; }
.actions svg { width: 32px; height: 32px; }
.actions .big { padding-top: 2px; }
.toast { position: absolute; top: 76px; right: 112px; width: 219px; height: 33px; display: flex; align-items: center; gap: 9px; padding-left: 12px; border-radius: 3px; background: #4b6d72; color: #fff; font-size: 9px; box-shadow: 0 0 7px #0006; }
.toast svg { width: 16px; height: 18px; }

.card { margin: 0 163px 0 189px; padding: 47px 15px 11px; border: 1px solid #ddd; border-radius: 3px; }
.groups { display: grid; grid-template-columns: repeat(9, minmax(0, 1fr)); gap: 1px; margin: 0 93px 0 86px; min-height: 46px; }
.groups button { display: flex; justify-content: center; align-items: flex-start; padding-top: 1px; background: #77c5c8; color: #fff; font-size: 9px; font-weight: bold; line-height: 14px; }
.groups .on { background: #2f7677; }
.groups .off { background: #d9d9d9; }
.groups .pending { background: #ee7280; }
h1 { margin: 11px 0 5px; text-align: center; font-size: 13px; line-height: 20px; font-weight: normal; color: #a34052; }
.green { display: flex; align-items: center; gap: 8px; height: 24px; padding: 0 8px 0 9px; border: 1px solid #57a035; border-radius: 3px; background: #6cbd45; color: #fff; font-size: 10px; white-space: nowrap; }
.green svg { width: 14px; height: 14px; }
table { width: 100%; margin-top: 5px; table-layout: fixed; border-collapse: collapse; font-size: 9px; color: #222; }
.c1 { width: 28px; }
.c2 { width: 50px; }
.c3 { width: 98px; }
.c5 { width: 62px; }
.c6 { width: 57px; }
th { height: 33px; padding: 0; background: #70b9bb; color: #fff; line-height: 12px; border-bottom: 1px solid #559698; }
th:nth-child(2) { padding-right: 4px; }
th:first-child { padding-right: 7px; }
td { height: 20px; padding: 0; text-align: center; }
tbody tr:nth-child(even) { background: #ececec; }
td:nth-child(3) { text-align: left; padding-left: 9px; }
td:nth-child(4) { text-align: left; padding-left: 5px; font-weight: bold; }
td:nth-child(5) { text-align: right; padding-right: 1px; }
.name, .ops { display: flex; align-items: center; }
.name { gap: 5px; }
.ops { justify-content: center; gap: 2px; padding-left: 6px; }
.icon, .icon svg { display: block; width: 12px; height: 12px; }
.foot { display: flex; justify-content: flex-end; gap: 3px; margin-top: 12px; }
.pointer { position: absolute; left: 65%; top: 259px; width: 12px; height: 14px; margin-left: 4px; }
.chat { position: absolute; right: 8px; bottom: 0; display: flex; align-items: center; height: 21px; border-radius: 3px 3px 0 0; overflow: hidden; background: #c57217; color: #fff; font: bold 9px "DejaVu Sans", sans-serif; white-space: nowrap; }
.bubble { display: grid; place-items: center; width: 26px; height: 21px; background: #95520f; }
.bubble svg { width: 13px; height: 12px; }
.label { padding: 0 5px; }

.dock { position: relative; height: 38px; background: linear-gradient(90deg, #193752 64px, #0000 64px calc(100% - 125px), #193752 calc(100% - 125px)), linear-gradient(#646464, #777); }
.shelf { position: absolute; inset: 0; width: 100%; height: 100%; }
.apps { position: relative; display: flex; justify-content: center; padding: 7px 0 0 4px; height: 38px; }
.apps svg { width: 23px; height: 23px; margin: 0 1px; }
.apps .run { height: 30px; padding-bottom: 7px; background: linear-gradient(#fff, #fff) 50% 100% / 9px 2px no-repeat; }
.apps i { width: 12px; }
.day { font: bold 10px "Liberation Sans", sans-serif; fill: #222; }
```
